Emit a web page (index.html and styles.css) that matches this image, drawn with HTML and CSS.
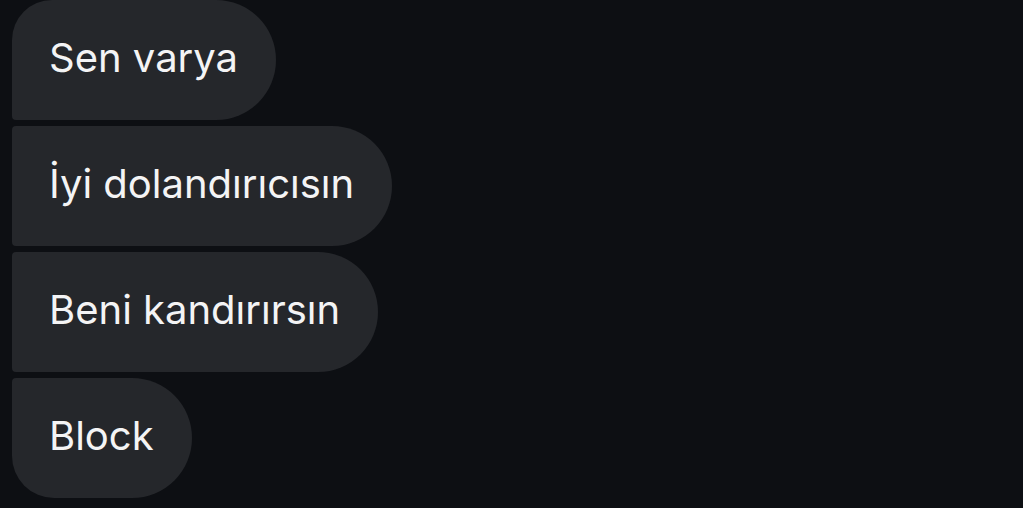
FILE: index.html
```html
<!DOCTYPE html>
<html lang="tr">
<head>
    <meta charset="UTF-8">
    <meta name="viewport" content="width=device-width, initial-scale=1.0">
    <title>Mesajlar</title>
    <link rel="stylesheet" href="styles.css">
</head>
<body>
    <div class="thread">
        <div class="bubble first">Sen varya</div>
        <div class="bubble">İyi dolandırıcısın</div>
        <div class="bubble">Beni kandırırsın</div>
        <div class="bubble last">Block</div>
    </div>
</body>
</html>
```

FILE: styles.css
```css
body {
    margin: 0;
    background-color: #0d0f13;
    font-family: Inter, "Noto Sans", sans-serif;
}
.thread {
    display: flex;
    flex-direction: column;
    align-items: flex-start;
    gap: 6px;
    padding-left: 12px;
}
.bubble {
    box-sizing: border-box;
    height: 120px;
    display: flex;
    align-items: center;
    padding: 0 38px 6px 37px;
    background-color: #25272b;
    color: #f4f4f5;
    font-size: 40px;
    border-radius: 4px 60px 60px 4px;
}
.bubble.first {
    border-top-left-radius: 40px;
}
.bubble.last {
    border-bottom-left-radius: 42px;
}
```
